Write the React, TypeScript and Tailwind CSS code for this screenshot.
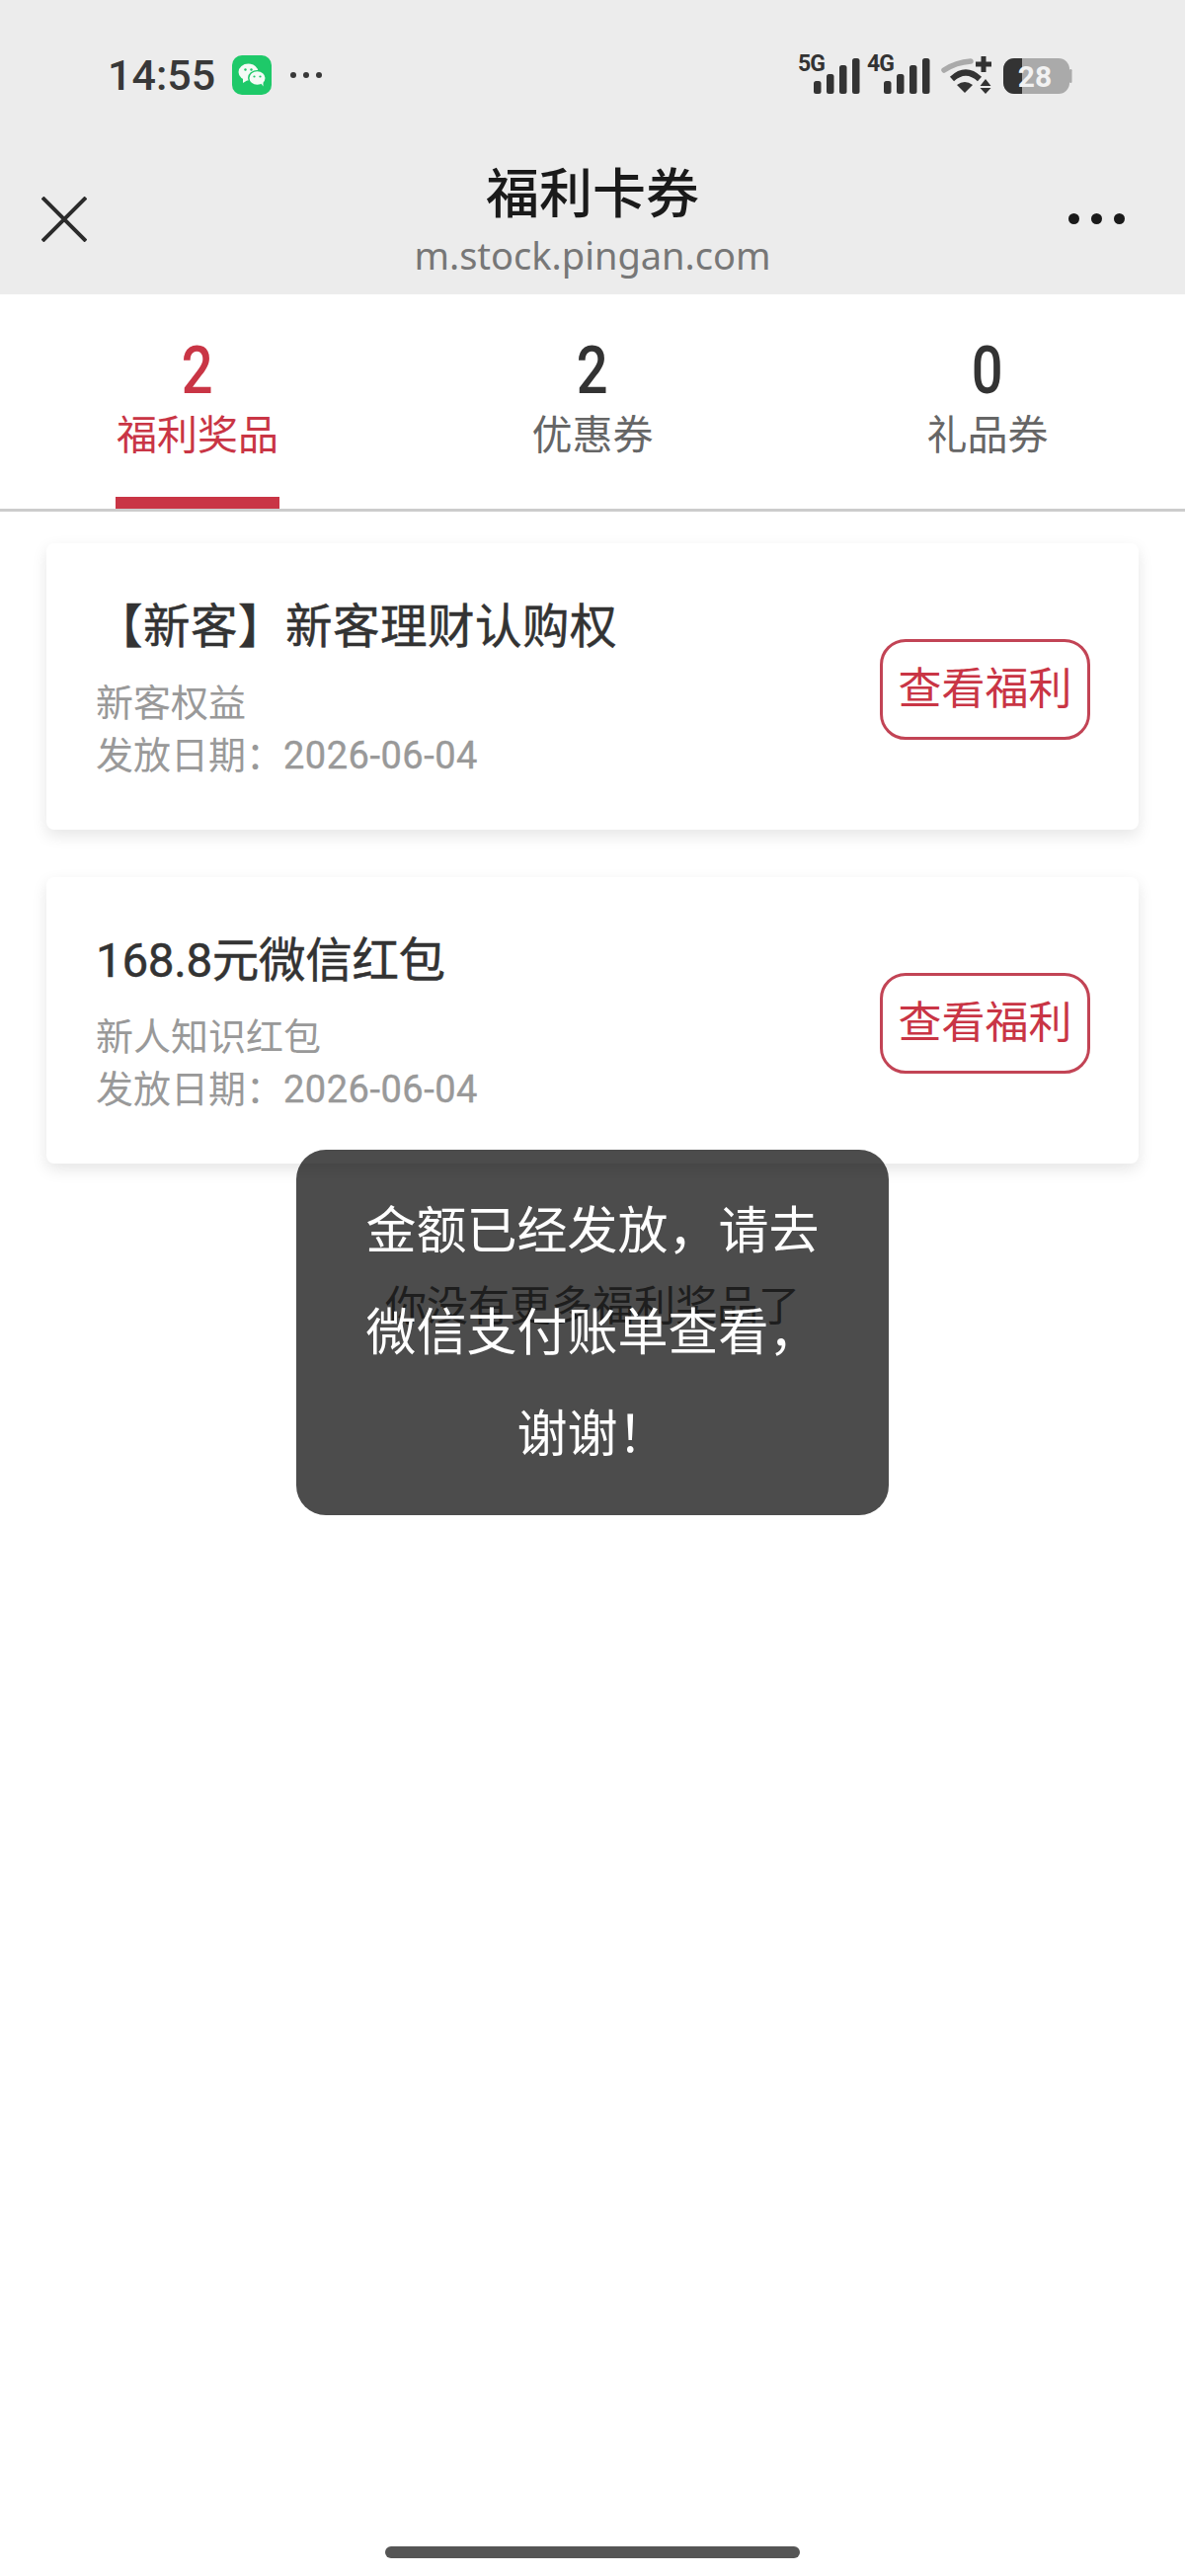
const CJK = "font-['Roboto','Noto_Sans_CJK_SC',sans-serif]";

function WeChatIcon() {
  return (
    <svg width="40" height="40" viewBox="0 0 40 40">
      <rect width="40" height="40" rx="10" fill="#1ec969" />
      <ellipse cx="16.5" cy="17" rx="10" ry="8.5" fill="#f4fbf6" />
      <path d="M11 23l0 5 5-3z" fill="#f4fbf6" />
      <ellipse cx="25.5" cy="23" rx="9.5" ry="8" fill="#1ec969" />
      <ellipse cx="25.5" cy="23" rx="8" ry="6.7" fill="#f4fbf6" />
      <path d="M29 28l2.5 3.5 0-5z" fill="#f4fbf6" />
      <circle cx="13.5" cy="14.5" r="1.2" fill="#1ec969" />
      <circle cx="19.5" cy="14.5" r="1.2" fill="#1ec969" />
      <circle cx="22.5" cy="21.5" r="1.1" fill="#1ec969" />
      <circle cx="28.5" cy="21.5" r="1.1" fill="#1ec969" />
    </svg>
  );
}

function StatusIcons() {
  const bars = [
    { x: 0, y: 23 },
    { x: 13, y: 16 },
    { x: 26, y: 7 },
    { x: 39, y: 0 },
  ];
  return (
    <svg width="310" height="50" viewBox="0 0 310 50" className="block">
      <text x="28" y="22" fontFamily="Roboto, sans-serif" fontWeight="700" fontSize="23" letterSpacing="-1" fill="#333">5G</text>
      {bars.map((b) => (
        <rect key={b.x} x={44 + b.x} y={9 + b.y} width="7.5" height={36 - b.y} rx="2.5" fill="#333" />
      ))}
      <text x="98" y="22" fontFamily="Roboto, sans-serif" fontWeight="700" fontSize="23" letterSpacing="-1" fill="#333">4G</text>
      {bars.map((b) => (
        <rect key={b.x} x={115 + b.x} y={9 + b.y} width="7.5" height={36 - b.y} rx="2.5" fill="#333" />
      ))}
      {/* wifi */}
      <path d="M176 21 Q 188 13 203 12" fill="none" stroke="#aaa" strokeWidth="5.5" strokeLinecap="round" />
      <path d="M184 30 Q 198 17 212 30" fill="none" stroke="#333" strokeWidth="6" />
      <path d="M197 44 L189 36 Q197 30 205 36 Z" fill="#333" />
      <path d="M208 15h16M216 7v16" stroke="#333" strokeWidth="5" fill="none" />
      <path d="M218 30l5.5 7h-11zM218 45l-5.5-6h11z" fill="#333" />
      {/* battery */}
      <rect x="236" y="9" width="67" height="36" rx="11" fill="#aaa" />
      <rect x="303" y="20" width="2.5" height="14" rx="1.2" fill="#aaa" />
      <path d="M247 9h8v36h-8a11 11 0 0 1-11-11V20a11 11 0 0 1 11-11z" fill="#333" />
      <text x="268" y="38" textAnchor="middle" fontFamily="Roboto, sans-serif" fontWeight="700" fontSize="30" fill="#f2f2f2">28</text>
    </svg>
  );
}

function StatusBar() {
  return (
    <div className="flex h-[144px] items-start justify-between pl-[109px] pr-[110px] pt-[50px]">
      <div className="flex items-center">
        <span className="text-[43px] leading-[52px] font-medium text-[#383838] font-['Roboto',sans-serif]">14:55</span>
        <span className="ml-[17px]"><WeChatIcon /></span>
        <span className="ml-[19px] flex gap-[7px]">
          <i className="block h-[6px] w-[6px] rounded-full bg-[#383838]" />
          <i className="block h-[6px] w-[6px] rounded-full bg-[#383838]" />
          <i className="block h-[6px] w-[6px] rounded-full bg-[#383838]" />
        </span>
      </div>
      <StatusIcons />
    </div>
  );
}

function NavBar() {
  return (
    <div className="relative flex h-[154px] items-start justify-between pl-[42px] pr-[61px]">
      <svg width="46" height="46" viewBox="0 0 46 46" className="mt-[55px]">
        <path d="M1 1L45 45M45 1L1 45" stroke="#2b2b2b" strokeWidth="4" fill="none" />
      </svg>
      <div className="absolute left-0 right-0 top-0 flex flex-col items-center">
        <div className="mt-[19px] text-[54px] leading-[70px] font-medium text-[#1a1a1a]">福利卡券</div>
        <div className="mt-[2px] text-[38px] leading-[46px] text-[#777] font-['Noto_Sans',sans-serif]">m.stock.pingan.com</div>
      </div>
      <div className="mt-[72px] flex gap-[12px]">
        <i className="block h-[11px] w-[11px] rounded-full bg-[#1a1a1a]" />
        <i className="block h-[11px] w-[11px] rounded-full bg-[#1a1a1a]" />
        <i className="block h-[11px] w-[11px] rounded-full bg-[#1a1a1a]" />
      </div>
    </div>
  );
}

function Tab({ count, label, active }: { count: number; label: string; active?: boolean }) {
  return (
    <div className="relative flex w-[400px] flex-col items-center pt-[41px]">
      <div className={`scale-x-[.85] text-[66px] leading-[74px] font-medium font-['Roboto',sans-serif] ${active ? "text-[#c93545]" : "text-[#333]"}`}>
        {count}
      </div>
      <div className={`mt-[1px] text-[41px] leading-[54px] ${active ? "text-[#c93545]" : "text-[#666]"}`}>{label}</div>
      {active && <div className="absolute bottom-0 left-[117px] h-[12px] w-[166px] bg-[#c93545]" />}
    </div>
  );
}

function RewardCard({ title, sub, date, bracket }: { title: string; sub: string; date: string; bracket?: boolean }) {
  return (
    <div className="flex h-[290px] items-center justify-between rounded-[8px] bg-white pl-[50px] pr-[49px] shadow-[0_6px_16px_rgba(0,0,0,0.1)]">
      <div className="mt-[6px] flex flex-col">
        <div className={`text-[47.5px] leading-[60px] text-[#333] [-webkit-text-stroke:0.5px_#333] ${bracket ? "tracking-[0.5px]" : "tracking-[-0.3px]"}`}>{title}</div>
        <div className="mt-[21px] text-[38px] leading-[52px] text-[#999]">{sub}</div>
        <div className="mt-[1px] text-[38px] leading-[52px] text-[#999]">
          {"发放日期\uFF1A"}
          <span className="tracking-[0.5px] [-webkit-text-stroke:0.4px_#999]">{date}</span>
        </div>
      </div>
      <button className="mt-[6px] flex h-[102px] w-[213px] items-center justify-center rounded-[26px] border-[3px] border-[#c24455] bg-white text-[44px] text-[#c93545]">
        查看福利
      </button>
    </div>
  );
}

export default function App() {
  return (
    <div className={`relative h-[2608px] w-[1200px] overflow-hidden bg-white ${CJK}`}>
      <header className="bg-[#ececec]">
        <StatusBar />
        <NavBar />
      </header>

      <nav className="flex h-[220px] border-b-[3px] border-[#ccc]">
        <Tab count={2} label="福利奖品" active />
        <Tab count={2} label="优惠券" />
        <Tab count={0} label="礼品券" />
      </nav>

      <main className="flex flex-col gap-[48px] px-[47px] pt-[32px]">
        <RewardCard title="【新客】新客理财认购权" sub="新客权益" date="2026-06-04" bracket />
        <RewardCard title="168.8元微信红包" sub="新人知识红包" date="2026-06-04" />
      </main>

      <p className="mt-[117px] text-center text-[42px] leading-[56px] text-[#666]">你没有更多福利奖品了</p>

      {/* toast */}
      <div className="absolute left-[300px] top-[1164px] flex h-[370px] w-[600px] flex-col items-center justify-center rounded-[30px] bg-black/70 px-[60px] text-center text-[51px] leading-[103px] text-white">
        {"金额已经发放\uFF0C请去微信支付账单查看\uFF0C谢谢\uFF01"}
      </div>

      <div className="absolute left-[390px] top-[2578px] h-[12px] w-[420px] rounded-full bg-[#555]" />
    </div>
  );
}
